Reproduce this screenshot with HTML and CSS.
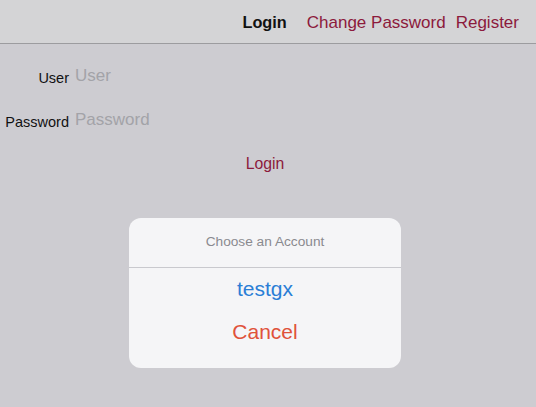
FILE: index.html
```html
<!DOCTYPE html>
<html>
<head>
<meta charset="utf-8">
<link rel="stylesheet" href="styles.css">
</head>
<body>
<header class="topbar">
  <nav class="nav">
    <span class="nav-current">Login</span>
    <a class="nav-link change">Change Password</a>
    <a class="nav-link">Register</a>
  </nav>
</header>
<main class="content">
  <div class="form">
    <div class="row row-user">
      <label class="label">User</label>
      <span class="placeholder">User</span>
    </div>
    <div class="row row-pass">
      <label class="label">Password</label>
      <span class="placeholder">Password</span>
    </div>
    <div class="submit"><a class="login-link">Login</a></div>
  </div>
  <div class="sheet">
    <div class="sheet-title">Choose an Account</div>
    <div class="sheet-option">testgx</div>
    <div class="sheet-cancel">Cancel</div>
  </div>
</main>
</body>
</html>
```

FILE: styles.css
```css
html, body {
  margin: 0;
  padding: 0;
}
body {
  width: 536px;
  height: 407px;
  overflow: hidden;
  background: #cdccd1;
  font-family: "Liberation Sans", Arial, sans-serif;
}
.topbar {
  height: 43px;
  background: #d4d4d6;
  border-bottom: 1px solid #9c9c9f;
  display: flex;
  align-items: center;
  justify-content: flex-end;
}
.nav {
  display: flex;
  align-items: center;
  padding-right: 17px;
  font-size: 17px;
  padding-top: 2px;
}
.nav-current {
  font-weight: bold;
  font-size: 16.3px;
  color: #111;
  margin-right: 20px;
}
.nav-link {
  color: #8c1a3c;
}
.change {
  margin-right: 10px;
}
.content {
  display: flex;
  flex-direction: column;
}
.form {
  display: flex;
  flex-direction: column;
}
.row {
  display: flex;
  align-items: center;
  height: 22px;
}
.row-user {
  margin-top: 21px;
}
.row-pass {
  margin-top: 22px;
}
.label {
  width: 69px;
  text-align: right;
  font-size: 14.5px;
  color: #111;
  padding-top: 3px;
  white-space: nowrap;
}
.placeholder {
  margin-left: 6px;
  font-size: 17px;
  color: #a3a3a8;
}
.submit {
  margin-top: 24px;
  height: 22px;
  display: flex;
  justify-content: center;
  padding-right: 6px;
}
.login-link {
  font-size: 15.8px;
  color: #8c1a3c;
}
.sheet {
  margin-top: 41px;
  margin-left: 129px;
  width: 272px;
  height: 150px;
  background: #f5f5f7;
  border-radius: 12px;
  display: flex;
  flex-direction: column;
  align-items: stretch;
}
.sheet-title {
  height: 47px;
  border-bottom: 1px solid #c9c9ce;
  display: flex;
  align-items: center;
  justify-content: center;
  font-size: 13.7px;
  color: #8a8a8f;
  padding-bottom: 2px;
}
.sheet-option, .sheet-cancel {
  display: flex;
  align-items: center;
  justify-content: center;
  font-size: 21px;
  height: 43px;
}
.sheet-option {
  color: #2a7ed6;
  height: 42px;
}
.sheet-cancel {
  color: #e0523a;
}
```
